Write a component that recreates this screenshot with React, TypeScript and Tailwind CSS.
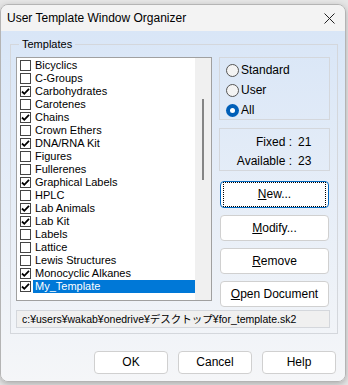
import type { ReactNode } from 'react';

const items: [string, boolean][] = [
  ['Bicyclics', false],
  ['C-Groups', false],
  ['Carbohydrates', true],
  ['Carotenes', false],
  ['Chains', true],
  ['Crown Ethers', false],
  ['DNA/RNA Kit', true],
  ['Figures', false],
  ['Fullerenes', false],
  ['Graphical Labels', true],
  ['HPLC', false],
  ['Lab Animals', true],
  ['Lab Kit', true],
  ['Labels', false],
  ['Lattice', false],
  ['Lewis Structures', false],
  ['Monocyclic Alkanes', true],
  ['My_Template', true],
];

const CheckBox = ({ checked }: { checked: boolean }) => (
  <div className="w-[11px] h-[11px] border border-[#444] bg-white flex items-center justify-center shrink-0">
    {checked && (
      <svg width="9" height="9" viewBox="0 0 9 9">
        <path d="M1 4.5 L3.3 6.8 L8 1.8" fill="none" stroke="#000" strokeWidth={1.8} />
      </svg>
    )}
  </div>
);

const Radio = ({ on, label }: { on?: boolean; label: string }) => (
  <div className="flex items-center gap-[2px] h-[13px]">
    {on ? (
      <div className="w-[13px] h-[13px] rounded-full bg-[#005fb8] flex items-center justify-center">
        <div className="w-[5px] h-[5px] rounded-full bg-white" />
      </div>
    ) : (
      <div className="w-[13px] h-[13px] rounded-full border border-[#555] bg-[#f3f3f3]" />
    )}
    <span>{label}</span>
  </div>
);

const Button = ({ children, focused, className = '' }: { children: ReactNode; focused?: boolean; className?: string }) => (
  <div
    className={`rounded-[4px] bg-white flex items-center justify-center ${
      focused ? 'border border-[#0067c0]' : 'border border-[#d0d0d0]'
    } ${className}`}
  >
    {focused ? (
      <div className="w-full h-full m-[2px] border border-dotted border-black flex items-center justify-center">
        {children}
      </div>
    ) : (
      children
    )}
  </div>
);

export default function App() {
  return (
    <div className="w-[348px] h-[385px] bg-[#e6e6e6] pt-[4px] pr-[2px] pb-[3px] font-['Liberation_Sans','Noto_Sans_CJK_JP',sans-serif] text-[11px] text-black leading-[13px]">
      <div className="h-full rounded-[8px] border border-[#b4b4b4] overflow-hidden flex flex-col shadow-[0_2px_6px_rgba(0,0,0,0.25)]">
        {/* title bar */}
        <div className="h-[26px] bg-[#f3f3f3] flex items-center justify-between pl-[6px] pr-[10px] shrink-0">
          <span className="text-[12px]">User Template Window Organizer</span>
          <svg width="11" height="11" viewBox="0 0 11 11">
            <path d="M0.5 0.5 L10.5 10.5 M10.5 0.5 L0.5 10.5" stroke="#222" strokeWidth={1} />
          </svg>
        </div>

        <div className="flex-1 bg-gradient-to-b from-[#d9e6f7] to-[#f5f6f8] pl-[9px] pr-[7px] flex flex-col">
          <fieldset className="mt-[7px] border border-[#d4d7dc] pl-[5px] pr-[7px] pt-[6px] pb-[5px]">
            <legend className="ml-[3px] px-[3px]">Templates</legend>
            <div className="flex items-start gap-[7px]">
              {/* list box */}
              <div className="w-[196px] h-[244px] border border-[#a0a0a0] bg-white flex">
                <div className="flex-1 pt-[1px] pl-[3px]">
                  {items.map(([name, checked], i) => {
                    const sel = i === items.length - 1;
                    return (
                      <div key={name} className="h-[13px] flex items-center gap-[2px]">
                        <CheckBox checked={checked} />
                        <span className={`flex-1 h-[13px] pl-[2px] ${sel ? 'bg-[#0078d7] text-white' : ''}`}>{name}</span>
                      </div>
                    );
                  })}
                </div>
                <div className="w-[16px] bg-[#f0f0f0] pt-[41px] flex justify-center">
                  <div className="w-[2px] h-[81px] bg-[#858585]" />
                </div>
              </div>

              {/* right column */}
              <div className="w-[111px] flex flex-col">
                <div className="h-[63px] border border-[#d4d7dc] pl-[6px] pt-[6px] flex flex-col gap-[7px] text-[12px]">
                  <Radio label="Standard" />
                  <Radio label="User" />
                  <Radio on label="All" />
                </div>
                <div className="h-[43px] mt-[8px] border border-[#d4d7dc] pt-[7px] flex flex-col gap-[6px] text-[12px]">
                  <div className="flex">
                    <span className="w-[72px] text-right">Fixed :</span>
                    <span className="pl-[6px]">21</span>
                  </div>
                  <div className="flex">
                    <span className="w-[72px] text-right">Available :</span>
                    <span className="pl-[6px]">23</span>
                  </div>
                </div>
                <div className="mt-[10px] flex flex-col gap-[7px] pl-[1px] pr-[1px] text-[12px]">
                  <Button focused className="h-[27px]">
                    <span><u>N</u>ew...</span>
                  </Button>
                  <Button className="h-[26px]">
                    <span><u>M</u>odify...</span>
                  </Button>
                  <Button className="h-[26px]">
                    <span><u>R</u>emove</span>
                  </Button>
                  <Button className="h-[26px]">
                    <span><u>O</u>pen Document</span>
                  </Button>
                </div>
              </div>
            </div>
            <div className="mt-[3px] h-[18px] border border-[#d4d7dc] bg-[#f0f0f0] flex items-center pl-[5px] text-[10.5px] whitespace-nowrap overflow-hidden">
              c:¥users¥wakab¥onedrive¥デスクトップ¥for_template.sk2
            </div>
          </fieldset>

          <div className="mt-[17px] flex justify-end gap-[10px] pr-[2px] text-[12px]">
            <Button className="w-[74px] h-[23px]">OK</Button>
            <Button className="w-[74px] h-[23px]">Cancel</Button>
            <Button className="w-[74px] h-[23px]">Help</Button>
          </div>
        </div>
      </div>
    </div>
  );
}
